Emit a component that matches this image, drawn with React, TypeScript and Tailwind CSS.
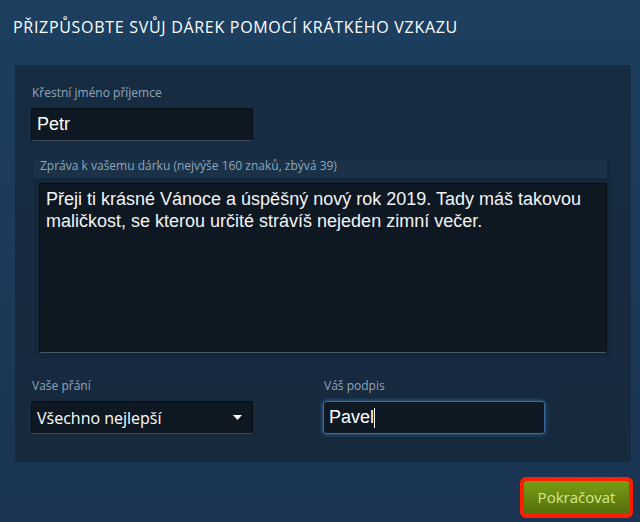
import React from 'react';

const Label: React.FC<{ children: React.ReactNode }> = ({ children }) => (
  <div className="pl-[1px] text-[12px] leading-[16px] text-[#8fa6ba]">{children}</div>
);

const Field: React.FC<{ children: React.ReactNode; focused?: boolean }> = ({ children, focused }) => (
  <div
    className={`mt-[7px] flex items-center w-[222px] h-[33px] pl-[5px] rounded-[3px] bg-[#0e1822] border ${
      focused
        ? 'border-[#3a6c9c] shadow-[0_0_4px_#2f6da8]'
        : 'border-[#080d12] border-b-[#3c4a58]'
    }`}
  >
    {children}
  </div>
);

export default function App() {
  return (
    <div className="w-[640px] h-[522px] overflow-hidden bg-gradient-to-b from-[#1d3f5f] to-[#1a3452] font-['Open_Sans',sans-serif]">
      <h1 className="pl-[13px] pt-[15px] text-[16px] leading-[24px] tracking-[0.7px] text-white uppercase">
        Přizpůsobte svůj dárek pomocí krátkého vzkazu
      </h1>

      <div className="mt-[26px] ml-[15px] w-[616px] bg-gradient-to-b from-[#172c42] to-[#17293d] pt-[20px] pb-[28px] px-[16px]">
        <Label>Křestní jméno příjemce</Label>
        <Field>
          <span className="font-['Liberation_Sans',Arial,sans-serif] text-[18px] text-white">Petr</span>
        </Field>

        {/* message */}
        <div className="mt-[19px] ml-[3px] w-[577px] bg-[#13273a] pr-[4px] pb-[5px]">
          <div className="h-[18px] pl-[6px] bg-[#1a3147] text-[12px] leading-[12px] text-[#8fa6ba]">
            Zpráva k vašemu dárku (nejvýše 160 znaků, zbývá 39)
          </div>
          <div className="mt-[5px] ml-[5px] h-[170px] rounded-[3px] bg-[#0e1822] border border-[#080d12] border-b-[#4a5663] px-[6px] pt-[4px] font-['Liberation_Sans',Arial,sans-serif] text-[18px] leading-[22px] text-[#f2f4f6]">
            Přeji ti krásné Vánoce a úspěšný nový rok 2019. Tady máš takovou maličkost, se kterou určité strávíš nejeden zimní večer.
          </div>
        </div>

        <div className="mt-[20px] flex gap-[70px]">
          <div>
            <Label>Vaše přání</Label>
            <Field>
              <span className="flex-1 text-[16px] text-white">Všechno nejlepší</span>
              <svg width="9" height="5" viewBox="0 0 9 5" className="mr-[10px]">
                <path d="M0 0h9L4.5 5z" fill="#ffffff" />
              </svg>
            </Field>
          </div>
          <div>
            <Label>Váš podpis</Label>
            <Field focused>
              <span className="font-['Liberation_Sans',Arial,sans-serif] text-[18px] text-white">Pavel</span>
              <span className="w-px h-[20px] bg-white" />
            </Field>
          </div>
        </div>
      </div>

      <div className="mt-[19px] pr-[11px] flex justify-end">
        <button className="w-[105px] h-[33px] rounded-[2px] bg-gradient-to-b from-[#7a9e14] to-[#536f0d] text-[15px] text-[#d3ea8a] outline-4 outline-solid outline-[#ff1e00]">
          Pokračovat
        </button>
      </div>
    </div>
  );
}
